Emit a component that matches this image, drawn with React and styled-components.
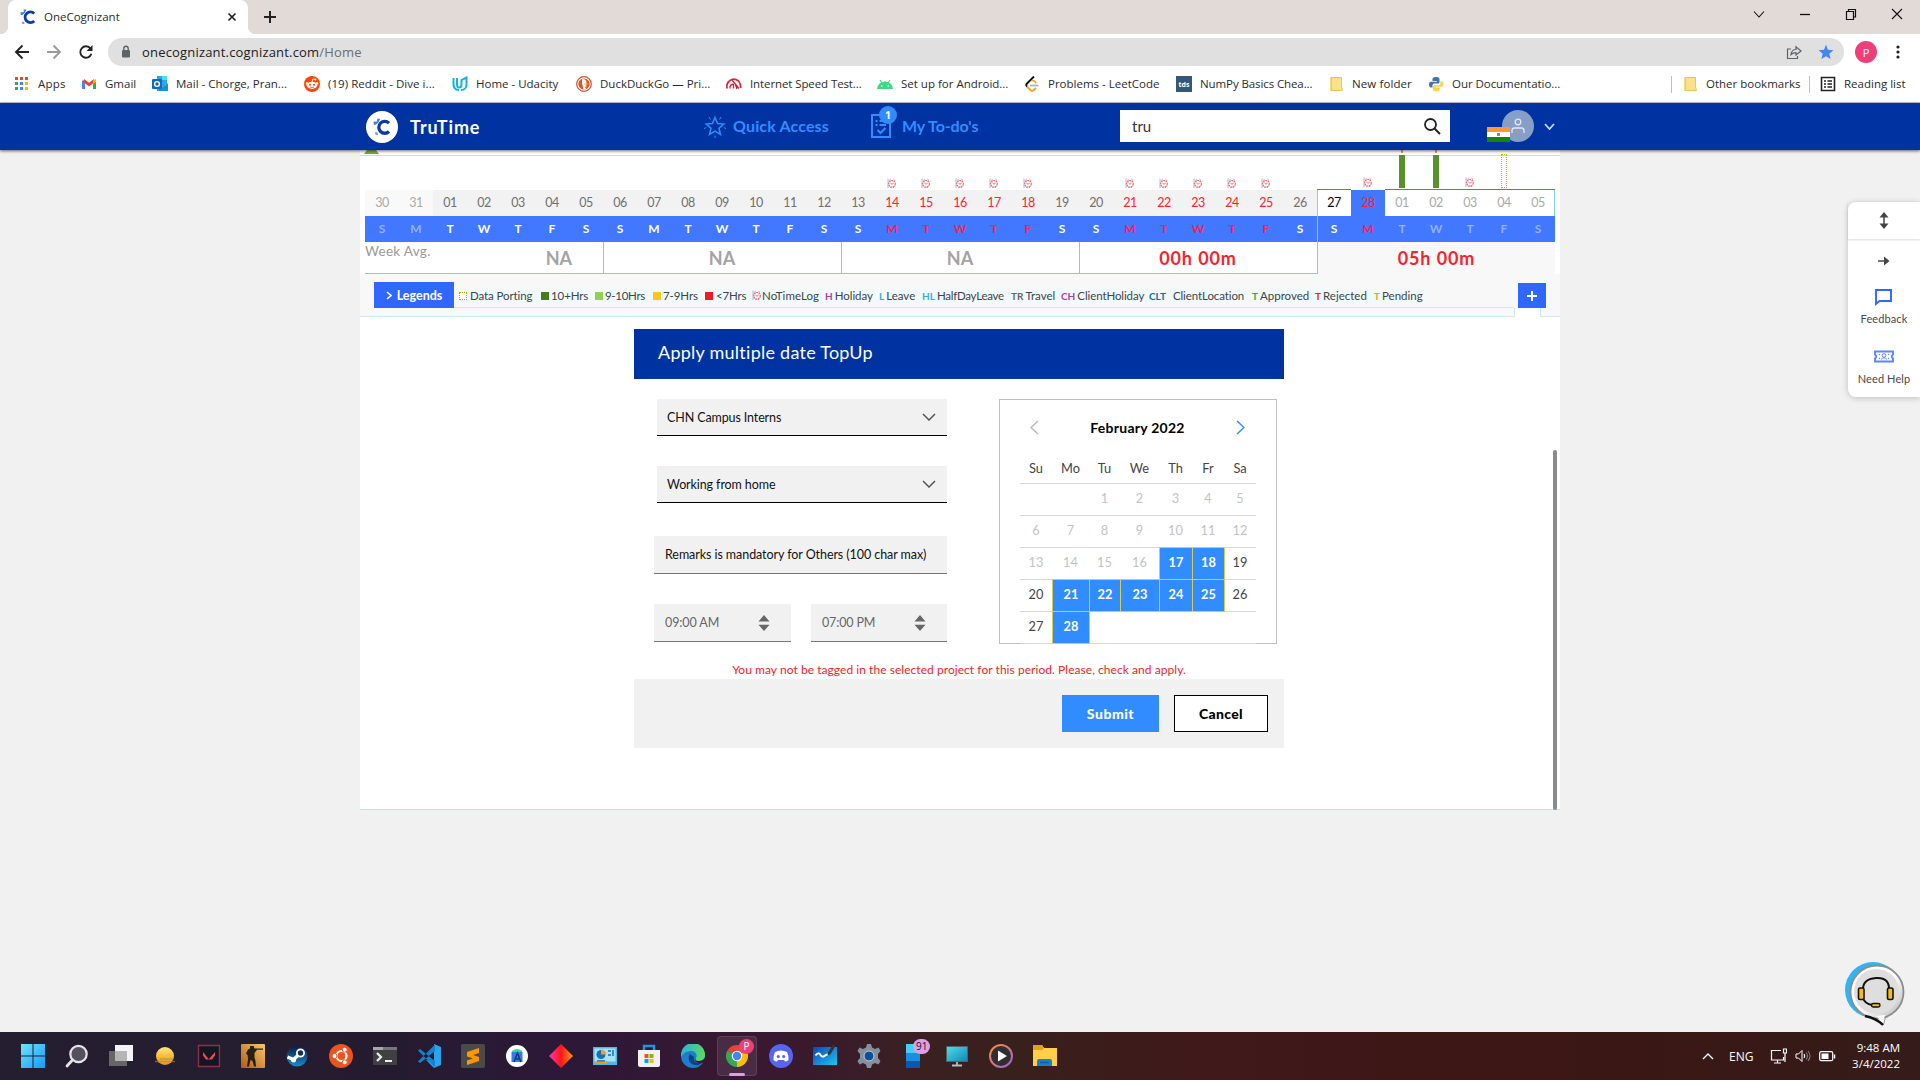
import React from "react";
import styled, { createGlobalStyle, css } from "styled-components";

const UI = '"Open Sans", "Noto Sans", sans-serif';
const BRAND = 'Lato, "Open Sans", sans-serif';

const Global = createGlobalStyle`
  * { box-sizing: border-box; }
  body { margin: 0; background: #f1f1f1; font-family: ${BRAND}; overflow: hidden; font-variant-ligatures: none; }
  svg { flex: none; }
`;

const Screen = styled.div`
  width: 1920px; height: 1080px; display: flex; flex-direction: column;
  overflow: hidden; background: #f1f1f1;
`;

const Txt = styled.span`
  white-space: nowrap; letter-spacing: ${(p) => p.$ls || 0}px;
`;

/* ---------- browser ---------- */
const TabStrip = styled.div`
  height: 34px; background: #e2dad7; display: flex; align-items: center;
  padding-left: 8px; flex: none; font-family: ${UI};
`;
const Tab = styled.div`
  width: 240px; height: 34px; background: #fff; border-radius: 8px 8px 0 0;
  display: flex; align-items: center; padding: 0 11px 0 12px; font-size: 11.5px; color: #2b2b2b;
  position: relative;
  &::before, &::after {
    content: ""; position: absolute; bottom: 0; width: 8px; height: 8px;
  }
  &::before { left: -8px; background: radial-gradient(circle at 0 0, transparent 8px, #fff 8.5px); }
  &::after { right: -8px; background: radial-gradient(circle at 100% 0, transparent 8px, #fff 8.5px); }
  span { margin-left: 8px; flex: 1; padding-bottom: 1px; }
`;
const NewTab = styled.div`
  margin-left: 15px; display: flex;
`;
const WindowControls = styled.div`
  margin-left: auto; display: flex; height: 28px; align-items: center; align-self: flex-start;
  svg { margin-right: 30px; }
  svg:last-child { margin-right: 15px; }
`;
const Toolbar = styled.div`
  height: 36px; background: #fff; display: flex; align-items: center; flex: none;
  padding-left: 14px; font-family: ${UI};
`;
const NavIcons = styled.div`
  width: 94px; display: flex; gap: 16px; flex: none;
`;
const Omnibox = styled.div`
  width: 1736px; height: 28px; border-radius: 14px; background: #e0e0e0; display: flex; flex: none;
  align-items: center; padding: 0 10px 0 12px; font-size: 13px; color: #202124;
  & > span { margin-left: 10px; flex: 1; }
  em { font-style: normal; color: #6b6e72; }
  svg + svg { margin-left: 16px; }
`;
const Profile = styled.div`
  width: 22px; height: 22px; border-radius: 50%; background: #ec407a; color: #fff; flex: none;
  font-size: 11px; display: flex; align-items: center; justify-content: center;
  margin: 0 18px 0 11px;
`;
const BookmarkBar = styled.div`
  height: 33px; background: #fff; border-bottom: 1px solid #c9c9cc; display: flex;
  align-items: center; padding: 0 0 4px 14px; flex: none; font-family: ${UI};
  font-size: 11.5px; color: #2b2b2b;
`;
const Bookmark = styled.div`
  width: ${(p) => p.$w}px; display: flex; align-items: center; gap: 8px; flex: none;
  span { padding-bottom: 2px; }
`;
const BarDivider = styled.div`
  width: 1px; height: 17px; background: #bdc1c6; margin: 0 ${(p) => p.$r}px 0 ${(p) => p.$l || 0}px;
`;

/* ---------- site header ---------- */
const Header = styled.header`
  height: 47px; background: #0033a1; display: flex; align-items: center; flex: none;
  padding: 0 0 2px 366px; box-shadow: 0 1px 3px rgba(0, 0, 0, 0.6); position: relative; z-index: 2;
`;
const BrandBox = styled.div`
  width: 337px; display: flex; align-items: center; gap: 12px; color: #fff;
  font-size: 18px; font-weight: 700; padding-top: 2px;
`;
const BrandLogo = styled.div`
  width: 32px; height: 32px; border-radius: 50%; background: #fff;
  display: flex; align-items: center; justify-content: center;
`;
const HeaderLink = styled.div`
  width: ${(p) => p.$w}px; display: flex; align-items: center; gap: ${(p) => p.$gap}px;
  color: #318dff; font-size: 16px; font-weight: 700; position: relative;
`;
const Badge = styled.div`
  position: absolute; left: 8px; top: -8px; width: 18px; height: 18px; border-radius: 50%;
  background: #318dff; color: #fff; font: 700 10.5px ${UI};
  display: flex; align-items: center; justify-content: center;
`;
const Search = styled.div`
  width: 330px; height: 32px; background: #fff; display: flex; align-items: center;
  justify-content: space-between; padding: 0 9px 0 12px; font-size: 15px; color: #333;
`;
const User = styled.div`
  margin-left: 37px; display: flex; align-items: center; position: relative; padding: 1px 0 0 15px;
`;
const Avatar = styled.div`
  width: 32px; height: 32px; border-radius: 50%; background: #859fc6;
  display: flex; align-items: center; justify-content: center; margin-right: 10px;
`;
const Flag = styled.div`
  position: absolute; left: 0; bottom: 0; width: 23px; height: 15px; z-index: 1;
  background: linear-gradient(#ff9933 0 34%, #fff 34% 67%, #138808 67%);
  display: flex; align-items: center; justify-content: center;
  &::after { content: ""; width: 3px; height: 3px; background: #7f7fc4; }
`;

/* ---------- time sheet ---------- */
const Body = styled.div`
  height: 882px; display: flex; padding-left: 360px; flex: none;
`;
const Sheet = styled.main`
  width: 1200px; height: 660px; background: #fff; border-bottom: 1px solid #c3e3f1;
  display: flex; flex-direction: column; position: relative;
`;
const Axis = styled.div`
  height: 6px; border-bottom: 1px solid #cfe5ba; padding-left: 4px; flex: none;
  &::before {
    content: ""; display: block; width: 15px; height: 4px; background: #7cab42;
    clip-path: polygon(20% 0, 80% 0, 100% 100%, 0 100%);
  }
`;
const Days = styled.div`
  display: grid; grid-template-columns: repeat(35, 34px); grid-template-rows: 100%; margin-left: 5px; flex: none;
  height: ${(p) => p.$h}px;
`;
const Mark = styled.div`
  display: flex; justify-content: center; align-items: flex-end;
  padding: 0 ${(p) => p.$pr || 0}px ${(p) => p.$pb}px 0;
`;
const HourBar = styled.div`
  width: 6px; height: 33px; background: #5a912b; position: relative; flex: none;
  &::before { content: ""; position: absolute; left: 2px; top: -5px; width: 2px; height: 3px; background: #d9a33b; }
`;
const PortingBar = styled.div`
  width: 6px; height: 34px; border: 1px dotted #bdb500; flex: none;
`;
const DateCell = styled.div`
  display: flex; align-items: center; justify-content: center; padding-bottom: 1px; font-size: 12.5px;
  letter-spacing: -0.4px;
  background: ${(p) => (p.$future || p.$today ? "#fff" : p.$prev ? "#f9f9f9" : "#f2f2f2")};
  color: ${(p) => (p.$red ? "#f9242c" : p.$prev || p.$future ? "#a9a9a9" : p.$today ? "#000" : "#707070")};
  ${(p) => p.$future && css`box-shadow: 0 -1px 0 #4178ff;`}
  ${(p) => p.$today && css`box-shadow: 0 -1px 0 #4178ff, inset 1px 0 0 #86d0f3;`}
  ${(p) => p.$last && css`box-shadow: 0 -1px 0 #4178ff, inset -1px 0 0 #86d0f3;`}
  ${(p) => p.$active && css`background: #4178ff;`}
`;
const DayCell = styled.div`
  display: flex; align-items: center; justify-content: center; padding-bottom: 2px;
  font-size: 12px; font-weight: 700; background: #4178ff;
  color: ${(p) => (p.$red ? "#f02655" : p.$dim ? "#93b2ff" : "#fff")};
  ${(p) => p.$edge && css`box-shadow: inset 1px 0 0 #86d0f3;`}
`;
const Weeks = styled.div`
  display: grid; grid-template-columns: 239px repeat(3, 238px) 237px; margin-left: 5px;
  height: 32px; flex: none;
`;
const Week = styled.div`
  border-right: 1px solid #7fcaf0; border-bottom: 1px solid #7fcaf0; display: flex;
  align-items: center; justify-content: center; font-size: 18px; font-weight: 700; color: #a3a3a3;
  padding: 1px 1px 0 0;
  &:last-child { border: 0; background: #f8f8f8; padding: 0 0 1px; }
  ${(p) => p.$alert && css`color: #f0262f; letter-spacing: 0.9px;`}
  ${(p) => p.$first && css`justify-content: space-between; padding-right: 31px;`}
`;
const WeekLabel = styled.span`
  font-size: 13.5px; font-weight: 400; align-self: flex-start; color: #999; letter-spacing: 0.3px;
`;
const LegendBar = styled.div`
  height: 43px; flex: none; background: #f8f8f8; border-bottom: 1px solid #cde9f3; display: flex;
  padding-left: 14px; align-items: flex-start; padding-top: 8px; margin-bottom: 12px;
`;
const LegendToggle = styled.div`
  width: 80px; height: 26px; background: #2f67ff; color: #fff; font-size: 12.5px; font-weight: 700;
  display: flex; align-items: center; justify-content: center; gap: 5px;
`;
const LegendList = styled.div`
  width: 1060px; height: 26px; border-bottom: 1px solid #cde9f3; display: flex; align-items: center;
  padding: 2px 0 0 5px; font-size: 11.5px; color: #444;
`;
const LegendItem = styled.div`
  width: ${(p) => p.$w}px; height: 14px; background: #f0f9fc; display: flex; align-items: center;
  gap: ${(p) => p.$gap || 2}px; flex: none;
`;
const Swatch = styled.i`
  width: 8px; height: 8px; flex: none; background: ${(p) => p.$c};
  ${(p) => p.$dotted && css`border: 1px dotted #b8b400; background: #fff;`}
`;
const Code = styled.b`
  font-size: 10px; color: ${(p) => p.$c};
`;
const AddColumn = styled.div`
  display: flex; flex-direction: column;
`;
const AddButton = styled.div`
  width: 28px; height: 25px; margin: 1px 0 0 4px; background: #2f67ff; display: flex;
  align-items: center; justify-content: center;
`;
const Notch = styled.div`
  width: 27px; height: 9px; background: #fff; border: solid #cde9f3; border-width: 0 1px;
`;
const ScrollThumb = styled.div`
  position: absolute; right: 3px; top: 300px; width: 4px; height: 360px; background: #8a8a8a; border-radius: 2px;
`;

/* ---------- dialog ---------- */
const Dialog = styled.section`
  width: 650px; margin-left: 274px; display: flex; flex-direction: column;
`;
const DialogTitle = styled.div`
  height: 50px; background: #0033a1; color: #fff; font-size: 18px; padding: 11px 0 0 24px; line-height: 24px;
`;
const DialogBody = styled.div`
  height: 300px; display: grid; grid-template-columns: 293px 278px; column-gap: 52px;
  padding-left: 20px; padding-top: 20px; grid-template-rows: 246px 1fr;
`;
const Fields = styled.div`
  display: flex; flex-direction: column;
`;
const Select = styled.div`
  height: 37px; margin: 0 0 30px 3px; background: #f1f1f1; border-bottom: 1px solid #000;
  display: flex; align-items: center; justify-content: space-between; padding: 0 11px 0 10px;
  font-size: 12.5px; color: #111;
`;
const Input = styled.div`
  height: 38px; width: ${(p) => p.$w || 293}px; background: #f1f1f1; border-bottom: 1px solid #767676;
  display: flex; align-items: center; justify-content: space-between; padding: 0 ${(p) => p.$pr || 0}px 0 11px;
  font-size: 12.5px; color: ${(p) => p.$c || "#111"};
`;
const TimeRow = styled.div`
  display: flex; gap: 20px; margin-top: 30px;
`;
const FieldGap = styled.div`
  height: 3px;
`;
const Calendar = styled.div`
  height: 245px; border: 1px solid #c0c0c0; display: flex; flex-direction: column; align-items: center;
`;
const MonthBar = styled.div`
  width: 225px; height: 55px; display: flex; align-items: center; justify-content: space-between; flex: none;
  padding: 0 5px 1px 4px; font-size: 14px; font-weight: 700; color: #000;
  span { padding-top: 1px; }
`;
const DateGrid = styled.div`
  width: 236px; display: grid; grid-template-columns: 32px 37px 31px 39px 33px 32px 32px; flex: none;
  grid-template-rows: 29px repeat(5, 32px); font-size: 12.8px; color: #444;
`;
const Cell = styled.div`
  display: flex; align-items: center; justify-content: center; border-bottom: 1px solid #d8d8d8;
  color: ${(p) => (p.$off ? "#c3c3c3" : "#444")}; padding-bottom: 3px;
  ${(p) => p.$on && css`
    background: #318dff; color: #fff; font-weight: 700; border-bottom-color: #d3cf55;
    border-left: 1px solid #d3cf55;
    box-shadow: 1px 0 0 #d3cf55, 0 -1px 0 #d3cf55; z-index: 1;
  `}
`;
const Warning = styled.div`
  grid-column: 1 / -1; text-align: center; font-size: 12px; color: #ec1f2b; padding: 17px 13px 0 0;
`;
const DialogFoot = styled.div`
  height: 69px; background: #f1f1f1; display: flex; justify-content: flex-end; gap: 15px; padding: 16px 16px 0 0;
`;
const Button = styled.div`
  width: ${(p) => p.$w}px; height: 37px; display: flex; align-items: center; justify-content: center;
  font-size: 14px; font-weight: 900; background: ${(p) => (p.$primary ? "#318dff" : "#fff")};
  color: ${(p) => (p.$primary ? "#fff" : "#000")}; letter-spacing: ${(p) => (p.$primary ? 0.5 : 0.3)}px;
  border: ${(p) => (p.$primary ? "0" : "1px solid #000")};
`;

/* ---------- side tools ---------- */
const Side = styled.aside`
  margin-left: 288px; width: 72px; display: flex; flex-direction: column; justify-content: space-between;
  align-items: flex-end;
`;
const SidePanel = styled.div`
  margin-top: 52px; width: 72px; height: 195px; background: #fff; border-radius: 8px 0 0 8px;
  box-shadow: 0 1px 6px rgba(0, 0, 0, 0.22); display: flex; flex-direction: column; align-items: center;
  font-size: 11px; color: #4a4a4a;
`;
const SideHandle = styled.div`
  width: 72px; height: 37px; display: flex; align-items: center; justify-content: center;
  box-shadow: 0 1px 2px rgba(0, 0, 0, 0.15); flex: none;
`;
const SideItem = styled.div`
  height: ${(p) => p.$h}px; display: flex; flex-direction: column; align-items: center;
  justify-content: space-between; margin-top: ${(p) => p.$mt}px;
`;
const ChatBubble = styled.div`
  margin: 0 15px 6px 0; display: flex;
`;

/* ---------- taskbar ---------- */
const Taskbar = styled.footer`
  height: 48px; flex: none; display: flex; align-items: center; padding: 0 20px 0 11px;
  background: linear-gradient(90deg, #241e30 0, #251b30 400px, #2c1838 560px, #391831 760px, #3a2022 920px, #38201c 1020px, #40191a 1200px, #3a1614 1600px, #351c1a 100%);
  color: #fff; font-family: ${UI};
`;
const TaskIcon = styled.div`
  width: 44px; height: 44px; display: flex; align-items: center; justify-content: center; position: relative;
  ${(p) => p.$active && css`
    &::before { content: ""; position: absolute; inset: 2px; border-radius: 4px; background: rgba(255,255,255,.09); border: 1px solid rgba(255,255,255,.1); }
    &::after { content: ""; position: absolute; bottom: 2px; width: 16px; height: 3px; border-radius: 2px; background: #d9a0e2; }
  `}
  svg { position: relative; }
`;
const TaskBadge = styled.span`
  position: absolute; left: ${(p) => p.$left || 24}px; top: ${(p) => p.$top}px; min-width: 15px; height: 15px; padding: 0 ${(p) => p.$px || 0}px; border-radius: 8px;
  background: ${(p) => p.$c}; color: ${(p) => p.$fg}; font-size: 10px; line-height: 15px; text-align: center;
`;
const Tray = styled.div`
  margin-left: auto; display: flex; align-items: center; font-size: 11.5px;
`;
const TrayLang = styled.div`
  width: 41px; margin-left: 15px; font-size: 12px;
`;
const TrayIcons = styled.div`
  display: flex; gap: 8px; width: 80px; align-items: center;
`;
const Clock = styled.div`
  width: 50px; text-align: right; line-height: 16px; display: flex; flex-direction: column; align-items: flex-end;
`;

/* ---------- drawings ---------- */
const S = ({ w = 16, h, vb, children, ...r }) => (
  <svg width={w} height={h || w} viewBox={vb || `0 0 ${w} ${h || w}`} fill="none" {...r}>
    {children}
  </svg>
);
const CLogo = ({ s = 16 }) => (
  <S w={s} vb="0 0 16 16">
    <path d="M14.2 4.5A5.3 5.3 0 1 0 14.2 12" stroke="#0b3aa5" strokeWidth="2.900" />
    <path d="M.5 3.200h3.200V.6h2.800L4.600 4.300 2.300 6H.8z" fill="#3f7af5" />
    <path d="M1.600 12.700h2.200l.9 2.300H2.400z" fill="#6e9bf5" />
  </S>
);
const Folder = () => (
  <S>
    <path d="M3.500 1.500h10v10l1 2v1h-11z" fill="#fde08a" stroke="#e8c65a" /><path d="M3 1v14" stroke="#f3cd5d" strokeWidth="1.500" />
  </S>
);
const NoLog = () => (
  <S w={9} h={11} vb="0 0 9 11">
    <path d="M1 .5v9.500" stroke="#b3b5dd" />
    <path d="M2.200 2.500L3.500 1.200M6.500 1.200L8 2.500" stroke="#f0848c" />
    <circle cx="5" cy="5.800" r="3.300" stroke="#ee5f6b" strokeWidth="1.100" strokeDasharray="1.900 .5" />
    <path d="M3.400 5l1.600 1.200L6.800 5M3.500 10l.6-1M6.600 10L6 9" stroke="#ee6b75" strokeWidth=".9" />
  </S>
);
const Chev = ({ w, h, c, sw = 1.5, d }) => {
  const p = { down: `M1 1L${w / 2} ${h - 1}L${w - 1} 1`, up: `M1 ${h - 1}L${w / 2} 1L${w - 1} ${h - 1}`, left: `M${w - 1} 1L1 ${h / 2}L${w - 1} ${h - 1}`, right: `M1 1L${w - 1} ${h / 2}L1 ${h - 1}` }[d];
  return <S w={w} h={h}><path d={p} stroke={c} strokeWidth={sw} /></S>;
};
const Spinner = () => (
  <S w={12} h={16}><path d="M6 0l5.500 6.500H.5zM6 16L.5 9.800h11z" fill="#666" /></S>
);

const appColors = [["#ea4335", "#ea4335", "#ea4335"], ["#34a853", "#4285f4", "#fbbc05"], ["#34a853", "#4285f4", "#fbbc05"]];

const bookmarks = [
  ["Apps", 67, 0.2, <S>{appColors.map((row, r) => row.map((c, i) => <rect key={r + "-" + i} x={1 + i * 5} y={1 + r * 5} width="3" height="3" fill={c} />))}</S>],
  ["Gmail", 71, 0, <S><path d="M1 4v9h3V7z" fill="#4285f4" /><path d="M15 4v9h-3V7z" fill="#34a853" /><path d="M2.500 4.300L8 8.600l5.500-4.300" stroke="#ea4335" strokeWidth="2.800" /><path d="M12 4.500l3-1.500v3l-3 2z" fill="#fbbc04" /></S>],
  ["Mail - Chorge, Pran...", 152, 0, <S><path d="M5 0h10v7l1 1v7H5z" fill="#28a8ea" /><path d="M10 0h5v4h-5z" fill="#50d9ff" /><path d="M5 15h11V8z" fill="#1490df" /><rect y="3" width="10" height="10" rx="1" fill="#0f6cbd" /><circle cx="5" cy="8" r="2.400" stroke="#fff" strokeWidth="1.400" /></S>],
  ["(19) Reddit - Dive i...", 148, 0.05, <S><circle cx="8" cy="8" r="8" fill="#ff4500" /><ellipse cx="8" cy="9.300" rx="5.200" ry="3.600" fill="#fff" /><circle cx="3" cy="7.500" r="1.300" fill="#fff" /><circle cx="13" cy="7.500" r="1.300" fill="#fff" /><circle cx="6" cy="8.800" r="1" fill="#ff4500" /><circle cx="10" cy="8.800" r="1" fill="#ff4500" /><path d="M8 6l.8-3 2.400.6" stroke="#fff" /><path d="M6 11q2 1.200 4 0" stroke="#ff4500" strokeWidth=".8" /><circle cx="11.400" cy="3.600" r="1" fill="#fff" /></S>],
  ["Home - Udacity", 124, 0, <S><path d="M1.500 2v6c0 4 2.500 6 5.500 6M5 2v6.500c0 2 1 3 2.200 3S9.500 10.500 9.500 8.500V4L14.500 1.500V8.500c0 3.500-2.500 5.500-5.500 5.500" stroke="#12b3e0" strokeWidth="2" /></S>],
  ["DuckDuckGo — Pri...", 150, 0, <S><circle cx="8" cy="8" r="7.300" fill="#fff" stroke="#c9502c" strokeWidth="1.200" /><circle cx="8" cy="8" r="5.600" fill="#d9552c" /><path d="M6 3.500c3-1 5 1 4.500 4L10 13l-2.500.5L6 7z" fill="#fff" /><path d="M8.500 7.500h3.500l-1 1.500H8.500z" fill="#fbbc04" /><path d="M9 10.500l2.500 1-2 1z" fill="#4caf50" /></S>],
  ["Internet Speed Test...", 151, -0.1, <S><path d="M1.200 12.500A7 7 0 0 1 4 4.500Q8 1.500 12.500 5q2.300 2.500 2.300 7" stroke="#e02638" strokeWidth="1.700" /><path d="M4 12.500q-.5-4 3.500-4.500M6 4l7 8.500M9.500 9l1.500 4M7.500 8v4.500" stroke="#c9283a" strokeWidth="1.300" /></S>],
  ["Set up for Android...", 147, 0, <S><path d="M0 13a8 7.500 0 0 1 16 0z" fill="#3ddc84" /><path d="M3 4l2 3M13 4l-2 3" stroke="#3ddc84" strokeWidth="1.200" /><circle cx="4.800" cy="10" r=".8" fill="#fff" /><circle cx="11.200" cy="10" r=".8" fill="#fff" /></S>],
  ["Problems - LeetCode", 152, 0, <S><path d="M10 .5L3 7.500c-1 1-1 2 0 3" stroke="#111" strokeWidth="1.900" /><path d="M3 10.500l3.500 3.700q1.500 1.500 3 0L12 12" stroke="#f5a11d" strokeWidth="1.900" /><path d="M6 9.500h8.500" stroke="#b3b3b3" strokeWidth="1.800" /><path d="M7.500 4.700q1.500-.7 3 .5l1.800 1.800" stroke="#f5a11d" strokeWidth="1.600" /></S>],
  ["NumPy Basics Chea...", 152, -0.1, <S><path d="M0 0h16v16H0z" fill="#355876" /><text x="8" y="10.500" fontSize="7" fontWeight="700" fill="#fff" textAnchor="middle" fontFamily="Open Sans">tds</text></S>],
  ["New folder", 100, 0.1, <Folder />],
  ["Our Documentatio...", 140, -0.05, <S><path d="M8 1c-3 0-3.500 1-3.500 2.200V5H9v.8H3C1.500 5.800 1 7 1 8.500s.5 3 2 3h1.500V9.500C4.500 8 5.500 7.500 6.500 7.500h3.600c1 0 1.400-.8 1.400-1.600V3.200C11.500 1.500 10 1 8 1z" fill="#3a76a8" /><path d="M8 15.500c3 0 3.700-1 3.700-2.300v-1.700H7.500v-.8h6c1.200 0 1.700-1.200 1.700-2.700s-.5-2.700-1.900-2.700h-1v2c0 1.200-1 2-2 2H6.500C5.500 9.300 4.800 10 4.800 11v2.300c0 1.500 1.200 2.200 3.200 2.200z" fill="#ffd544" /></S>],
];

const letters = "SMTWTFS";
const dates = ["30", "31", ...Array.from({ length: 28 }, (_, i) => String(i + 1).padStart(2, "0")), "01", "02", "03", "04", "05"];
const days = dates.map((d, i) => ({
  d, l: letters[i % 7], i,
  red: (i >= 15 && i <= 19) || (i >= 22 && i <= 26) || i === 29,
  prev: i < 2, future: i > 29,
}));
const markPad = (i) => (i > 28 ? 2 : 1);

const legends = [
  ["Data Porting", 82, -0.1, <Swatch $dotted />, 3], ["10+Hrs", 54, -0.1, <Swatch $c="#4a7d14" />],
  ["9-10Hrs", 58, -0.3, <Swatch $c="#92d050" />], ["7-9Hrs", 52, -0.1, <Swatch $c="#ffc41f" />],
  ["<7Hrs", 47, -0.15, <Swatch $c="#ee1c25" />, 3], ["NoTimeLog", 73, 0.05, <NoLog />, 1],
  ["Holiday", 54, -0.05, <Code $c="#b53aa6">H</Code>], ["Leave", 43, 0, <Code $c="#3fa9d0">L</Code>],
  ["HalfDayLeave", 89, -0.25, <Code $c="#3fa9d0">HL</Code>], ["Travel", 50, 0, <Code $c="#666">TR</Code>],
  ["ClientHoliday", 88, -0.1, <Code $c="#b53aa6">CH</Code>], ["ClientLocation", 103, -0.1, <Code $c="#0a7396">CLT</Code>, 7],
  ["Approved", 63, 0, <Code $c="#5a9a2b">T</Code>], ["Rejected", 59, 0, <Code $c="#ee1c25">T</Code>],
  ["Pending", 51, 0, <Code $c="#dfa91a">T</Code>],
];

const picked = [17, 18, 21, 22, 23, 24, 25, 28];

const tasks = [
  <S w={24}><defs><linearGradient id="win" x1="0" y1="0" x2="1" y2="1"><stop stopColor="#6fe4fb" /><stop offset="1" stopColor="#149af6" /></linearGradient></defs><path d="M0 0h11.500v11.500H0zM12.500 0H24v11.500H12.500zM0 12.500h11.500V24H0zM12.500 12.500H24V24H12.500z" fill="url(#win)" /></S>,
  <S w={24}><circle cx="13.500" cy="10" r="8.200" fill="#54505f" stroke="#e4e4ea" strokeWidth="2.200" /><path d="M7.500 16l-5.500 6" stroke="#e4e4ea" strokeWidth="2.800" strokeLinecap="round" /></S>,
  <S w={24}><path d="M6 1h18v16H6z" fill="#f4f4f6" /><path d="M0 7h18v15H0z" fill="#666" /><path d="M6 7h12v10H6z" fill="#b5b5b7" /></S>,
  <S w={24}><defs><linearGradient id="sun" x1="0" y1="0" x2="0" y2="1"><stop stopColor="#ffe58a" /><stop offset=".6" stopColor="#f8b526" /><stop offset="1" stopColor="#e0952a" /></linearGradient></defs><circle cx="12" cy="12" r="9" fill="url(#sun)" /><path d="M2 17.500h20M7 15h13" stroke="#a98a58" strokeOpacity=".6" strokeWidth="1.500" /></S>,
  <S w={24}><path d="M1.500 1.500h21v21h-21z" fill="#111823" stroke="#8d3042" strokeWidth="1.400" /><path d="M6 8l6 7.500H9L6 11.500zM18 8v3.500l-3 4h-2.800L12 15z" fill="#fa4454" /></S>,
  <S w={24}><defs><linearGradient id="cs" x1="1" y1="0" x2="0" y2="1"><stop stopColor="#f7c76b" /><stop offset="1" stopColor="#b35c14" /></linearGradient></defs><rect width="24" height="24" rx="1" fill="url(#cs)" /><path d="M9 2h3.500l1 2.500H22v1.200h-6L13.500 9v4.500l1 3.500.5 5.500h-2L11.500 17l-2-1-1.500 6.500H6L7 15l-.5-4L5 9.500 7 5.500l2-1z" fill="#2a2113" /></S>,
  <S w={24}><defs><linearGradient id="st" x1="0" y1="0" x2="0" y2="1"><stop stopColor="#0d1b3d" /><stop offset="1" stopColor="#1a8ac9" /></linearGradient></defs><circle cx="12" cy="12" r="10.500" fill="url(#st)" /><path d="M2.500 13l6 2.500 5.500-5" stroke="#fff" strokeWidth="3.500" /><circle cx="15.500" cy="9" r="3.600" fill="#12305a" stroke="#fff" strokeWidth="1.800" /><circle cx="8.500" cy="16" r="2.500" fill="#fff" /></S>,
  <S w={24}><circle cx="12" cy="12" r="12" fill="#e95420" /><circle cx="12.500" cy="12" r="5" stroke="#fff" strokeWidth="2.200" /><g fill="#fff" stroke="#e95420"><circle cx="5.500" cy="12" r="2.500" /><circle cx="15.700" cy="5.700" r="2.500" /><circle cx="15.700" cy="18.300" r="2.500" /></g></S>,
  <S w={24}><path d="M0 3h24v18H0z" fill="#404040" /><path d="M0 3h24v3H0z" fill="#a8a8a8" /><path d="M10 3h14v3H10z" fill="#777" /><path d="M4 9l4 4-4 4M12 17h7" stroke="#eee" strokeWidth="2.200" /></S>,
  <S w={24}><path d="M17 0l7 3v18l-7 3-8-8 8 2V6z" fill="#2aa5ec" /><path d="M1 6.500L3 5l15 12v6.500zM1 17.500L3 19 18 7V.5z" fill="#1382cf" /></S>,
  <S w={24}><rect width="24" height="24" rx="2" fill="#4a4a4a" /><path d="M6 8l12-4v5l-6 2 6 2v4L6 21v-4.500l6-2-6-2z" fill="#ff9800" /></S>,
  <S w={24}><circle cx="12" cy="12" r="11" fill="#fff" /><path d="M7 7q5-4 10 0v3H7z" fill="#3ddc84" /><path d="M6.500 8h11v10h-11z" fill="#2f7de8" /><path d="M9 18l3.500-9 3.500 9M11 15h3" stroke="#0f3b75" strokeWidth="1.500" /></S>,
  <S w={24}><defs><linearGradient id="ad" x1="0" x2="1"><stop stopColor="#f238b0" /><stop offset=".5" stopColor="#ff1515" /><stop offset="1" stopColor="#ff9a1c" /></linearGradient></defs><path d="M12 0l12 12-12 12L0 12z" fill="url(#ad)" /></S>,
  <S w={24}><path d="M0 3h24v18H0z" fill="#4db7ea" /><path d="M1.500 4.500h21v13h-21z" fill="#a5e3fa" /><circle cx="8" cy="10.500" r="4.500" fill="#1470b5" /><path d="M8 10.500V5.500a5 5 0 0 1 5 5z" fill="#f39c28" /><path d="M15 7h3M15 11h3M20 6v6M4 17h8" stroke="#1470b5" strokeWidth="1.500" /><path d="M2 18.500h12" stroke="#f39c28" strokeWidth="1.500" /></S>,
  <S w={24}><path d="M7 6V2h10v4" stroke="#1d95e0" strokeWidth="2.500" /><path d="M1 6h22v15q0 2-2 2H3q-2 0-2-2z" fill="#f1f1f1" /><path d="M7.500 10h4v4h-4z" fill="#f25022" /><path d="M12.500 10h4v4h-4z" fill="#7fba00" /><path d="M7.500 15h4v4h-4z" fill="#00a4ef" /><path d="M12.500 15h4v4h-4z" fill="#ffb900" /></S>,
  <S w={24}><defs><linearGradient id="ed" x1="0" y1="0" x2="1" y2=".3"><stop stopColor="#2aaee6" /><stop offset="1" stopColor="#58d864" /></linearGradient></defs><circle cx="12" cy="12" r="12" fill="#1b7fd0" /><path d="M0 11A12 12 0 0 1 24 11c0 4-3 6-6 6-3 0-4-1-3-3 2-4-1-7-5-7S2 9 0 13z" fill="url(#ed)" /><path d="M9 10c-3 4-1 10 5 11 3 .5 6-.5 8-3-4 2-10 1-9-5z" fill="#123f80" /><path d="M24.500 13c-1.500 3-4 4-6.500 4-3 0-4.500-1-3-3.500-2 2.500-.5 5 3 5.500 2 .3 3.500 0 5-1z" fill="#35172f" /></S>,
  <><S w={22} vb="0 0 24 24"><path d="M12 12L1.600 6A12 12 0 0 1 22.400 6z" fill="#ea4335" /><path d="M12 12l10.400-6A12 12 0 0 1 12 24z" fill="#fbbc05" /><path d="M12 12v12A12 12 0 0 1 1.600 6z" fill="#34a853" /><circle cx="12" cy="12" r="5.800" fill="#fff" /><circle cx="12" cy="12" r="4.600" fill="#4285f4" /></S><TaskBadge $top={5} $c="#ec407a" $fg="#fff">P</TaskBadge></>,
  <S w={24}><circle cx="12" cy="12" r="12" fill="#5865f2" /><path d="M6 8q6-3 12 0 2 4 1.500 8-2 1.500-3.500 1.500l-1-1.500H9l-1 1.500q-1.500 0-3.500-1.500Q4 12 6 8z" fill="#fff" /><circle cx="9.300" cy="12.500" r="1.600" fill="#5865f2" /><circle cx="14.700" cy="12.500" r="1.600" fill="#5865f2" /></S>,
  <S w={24}><defs><linearGradient id="wb" x1="0" y1="0" x2="1" y2="1"><stop stopColor="#0b45b8" /><stop offset="1" stopColor="#22c4f0" /></linearGradient></defs><path d="M0 3h24v18H0z" fill="url(#wb)" /><path d="M2.500 11.500q3-4 5-.5 2 3 4.500.5 1.500-1 3-1" stroke="#fff" strokeWidth="2" /><path d="M15 8.500L20 .5l2.500 1.500-5 8-3 1.500z" fill="#333" /></S>,
  <S w={24}><path d="M10 0h4l1 3.500 3 1.500 3.500-1.500 2 3.500-2.500 3v4l2.500 3-2 3.500L18 19l-3 1.500-1 3.500h-4l-1-3.500L6 19l-3.500 1.500-2-3.500L3 14v-4L.5 7l2-3.500L6 5l3-1.500z" fill="#84919c" /><circle cx="12" cy="12" r="5" fill="#0d4f9c" stroke="#c5ccd2" /></S>,
  <><S w={24}><path d="M5 0h14v24H5z" fill="#1a8ee0" /><path d="M5 0h14v9H5z" fill="#43d0f5" /><path d="M5 17h14v7H5z" fill="#0c58a8" /></S><TaskBadge $left={22} $top={5} $px={3} $c="#dda0e6" $fg="#1b1020">91</TaskBadge></>,
  <S w={24}><defs><linearGradient id="mo" x1="0" y1="0" x2="1" y2="1"><stop stopColor="#4be0e8" /><stop offset="1" stopColor="#1583b5" /></linearGradient></defs><path d="M1.500 2.500h21v15h-21z" fill="url(#mo)" stroke="#55606a" /><path d="M12 18v3M7 21.500h10" stroke="#b5bcc2" strokeWidth="1.800" /></S>,
  <S w={24}><defs><linearGradient id="mp" x1="0" y1="0" x2="1" y2="1"><stop stopColor="#f98b3c" /><stop offset="1" stopColor="#9a62d8" /></linearGradient></defs><circle cx="12" cy="12" r="11" fill="#302e30" stroke="url(#mp)" strokeWidth="2" /><path d="M9 6.500l9 5.500-9 5.500z" fill="#fff" /></S>,
  <S w={24}><path d="M0 1h9l2 3h13v18H0z" fill="#ffcf48" /><path d="M0 1h9l2 3-2 2H0z" fill="#e0a21b" /><path d="M4 22v-5q0-2 2-2h11q2 0 2 2v5z" fill="#1680d0" /><path d="M7 18.500h9" stroke="#0c5ea5" strokeWidth="1.500" /></S>,
];

export default function App() {
  return (
    <Screen>
      <Global />
      <TabStrip>
        <Tab>
          <CLogo />
          <Txt>OneCognizant</Txt>
          <S w={10}><path d="M1.500 1.500l7 7M8.500 1.500l-7 7" stroke="#222" strokeWidth="1.700" /></S>
        </Tab>
        <NewTab><S w={14}><path d="M7 1v12M1 7h12" stroke="#222" strokeWidth="2" /></S></NewTab>
        <WindowControls>
          <S><path d="M3 5.500l5 5.500 5-5.500" stroke="#111" strokeWidth="1.100" /></S>
          <S><path d="M3 8.500h10" stroke="#111" strokeWidth="1.300" /></S>
          <S><path d="M3.500 5.500h7v8h-7zM5.500 5V3.500h7v7.500H11" stroke="#111" strokeWidth="1.200" /></S>
          <S><path d="M3 3l10 10M13 3L3 13" stroke="#111" strokeWidth="1.100" /></S>
        </WindowControls>
      </TabStrip>

      <Toolbar>
        <NavIcons>
          <S><path d="M15 8H2M8.500 1.500L2 8l6.500 6.500" stroke="#222" strokeWidth="1.900" /></S>
          <S><path d="M1 8h13M7.500 1.500L14 8l-6.500 6.500" stroke="#9a9a9a" strokeWidth="1.900" /></S>
          <S><path d="M13.400 9.800A5.700 5.700 0 1 1 12.500 4.500" stroke="#222" strokeWidth="1.900" /><path d="M14.500 1v6h-6z" fill="#222" /></S>
        </NavIcons>
        <Omnibox>
          <S w={12} h={14} vb="0 0 12 14"><rect x="2" y="5" width="8" height="7.500" rx="1" fill="#5f6368" /><path d="M3.800 5V3.500a2.200 2.200 0 0 1 4.400 0V5" stroke="#5f6368" strokeWidth="1.400" /></S>
          <Txt $ls={0.18}>onecognizant.cognizant.com<em>/Home</em></Txt>
          <S><path d="M5 5H1.500v9.500h10V12M5 10.500c.5-3.500 2-5 5-5V2.800L15 7l-5 4V8.600c-2.500 0-3.500.4-5 1.900z" stroke="#5f6368" strokeWidth="1.200" /></S>
          <S><path d="M8 .8l2 5 5.400.4-4.100 3.500 1.300 5.300L8 12.200 3.400 15l1.300-5.300L.6 6.200 6 5.800z" fill="#4285f4" /></S>
        </Omnibox>
        <Profile>P</Profile>
        <S w={6} h={16}><g fill="#222"><circle cx="3" cy="3" r="1.600" /><circle cx="3" cy="8" r="1.600" /><circle cx="3" cy="13" r="1.600" /></g></S>
      </Toolbar>

      <BookmarkBar>
        {bookmarks.map(([t, w, ls, icon]) => (
          <Bookmark key={t} $w={w}>{icon}<Txt $ls={ls}>{t}</Txt></Bookmark>
        ))}
        <BarDivider $l={103} $r={10} />
        <Bookmark $w={117}><Folder /><Txt>Other bookmarks</Txt></Bookmark>
        <BarDivider $l={10} $r={10} />
        <Bookmark $w={90}>
          <S><path d="M1.500 1.500h13v13h-13z" stroke="#222" strokeWidth="1.600" /><path d="M4 5h2M7.500 5H12M4 8h2M7.500 8H12M4 11h2M7.500 11H12" stroke="#222" strokeWidth="1.500" /></S>
          <Txt>Reading list</Txt>
        </Bookmark>
      </BookmarkBar>

      <Header>
        <BrandBox><BrandLogo><CLogo s={18} /></BrandLogo><Txt $ls={0.9}>TruTime</Txt></BrandBox>
        <HeaderLink $w={168} $gap={6}>
          <S w={24}><path d="M12 3.500l2.500 6 6.300.5-4.800 4.200 1.500 6.300L12 17.200l-5.500 3.300L8 14.200 3.200 10l6.300-.5z" stroke="#318dff" strokeWidth="1.500" /><path d="M6 3l1.500 2.500M18 3l-1.500 2.500M1 14.500l2-.8M23 14.500l-2-.8M12 21.500V24" stroke="#318dff" /></S>
          <Txt $ls={0.15}>Quick Access</Txt>
        </HeaderLink>
        <HeaderLink $w={249} $gap={11}>
          <S w={20} h={24}><path d="M1 1h18v22H1z" stroke="#318dff" strokeWidth="2" /><path d="M4.500 7h2M8.500 7H15M4.500 11h2M8.500 11H15" stroke="#318dff" strokeWidth="1.800" /><path d="M6.500 16l3 3 5-5" stroke="#318dff" strokeWidth="2" /></S>
          <Txt $ls={-0.1}>My To-do's</Txt>
          <Badge>1</Badge>
        </HeaderLink>
        <Search>
          <Txt>tru</Txt>
          <S w={18}><circle cx="7.500" cy="7.500" r="5.500" stroke="#222" strokeWidth="1.800" /><path d="M11.500 11.500L17 17" stroke="#222" strokeWidth="2" /></S>
        </Search>
        <User>
          <Flag />
          <Avatar><S><circle cx="8" cy="4" r="2.800" stroke="#dfe9f7" strokeWidth="1.300" /><path d="M2 15v-2.500q0-2.500 2.500-2.500h7q2.500 0 2.500 2.500V15" stroke="#dfe9f7" strokeWidth="1.300" /></S></Avatar>
          <Chev w={11} h={7} c="#c9d8ee" sw={1.800} d="down" />
        </User>
      </Header>

      <Body>
        <Sheet>
          <Axis />
          <Days $h={34}>
            {days.map(({ i, red }) => (
              <Mark key={i} $pb={markPad(i)} $pr={red || i === 32 ? 1 : 0}>
                {(red || i === 32) && <NoLog />}
                {(i === 30 || i === 31) && <HourBar />}
                {i === 33 && <PortingBar />}
              </Mark>
            ))}
          </Days>
          <Days $h={26}>
            {days.map((x) => (
              <DateCell key={x.i} $red={x.red} $prev={x.prev} $future={x.future} $today={x.i === 28} $active={x.i === 29} $last={x.i === 34}>{x.d}</DateCell>
            ))}
          </Days>
          <Days $h={26}>
            {days.map((x) => (
              <DayCell key={x.i} $red={x.red} $dim={x.prev || x.future} $edge={x.i === 28}>{x.l}</DayCell>
            ))}
          </Days>
          <Weeks>
            <Week $first><WeekLabel>Week Avg.</WeekLabel>NA</Week>
            <Week>NA</Week>
            <Week>NA</Week>
            <Week $alert>00h 00m</Week>
            <Week $alert>05h 00m</Week>
          </Weeks>
          <LegendBar>
            <LegendToggle><Chev w={6} h={9} c="#fff" sw={1.600} d="right" /><Txt>Legends</Txt></LegendToggle>
            <LegendList>
              {legends.map(([t, w, ls, mark, gap]) => (
                <LegendItem key={t} $w={w} $gap={gap}>{mark}<Txt $ls={ls}>{t}</Txt></LegendItem>
              ))}
            </LegendList>
            <AddColumn>
              <AddButton><S w={12}><path d="M6 1v10M1 6h10" stroke="#fff" strokeWidth="2" /></S></AddButton>
              <Notch />
            </AddColumn>
          </LegendBar>

          <Dialog>
            <DialogTitle><Txt $ls={0.25}>Apply multiple date TopUp</Txt></DialogTitle>
            <DialogBody>
              <Fields>
                <Select><Txt $ls={-0.12}>CHN Campus Interns</Txt><Chev w={14} h={8} c="#555" d="down" /></Select>
                <Select><Txt $ls={-0.1}>Working from home</Txt><Chev w={14} h={8} c="#555" d="down" /></Select>
                <FieldGap />
                <Input><Txt $ls={-0.07}>Remarks is mandatory for Others (100 char max)</Txt></Input>
                <TimeRow>
                  <Input $w={137} $pr={21} $c="#666"><Txt $ls={-0.1}>09:00 AM</Txt><Spinner /></Input>
                  <Input $w={136} $pr={21} $c="#666"><Txt $ls={-0.15}>07:00 PM</Txt><Spinner /></Input>
                </TimeRow>
              </Fields>
              <Calendar>
                <MonthBar>
                  <Chev w={9} h={15} c="#bbb" d="left" />
                  <Txt $ls={0.25}>February 2022</Txt>
                  <Chev w={9} h={15} c="#318dff" d="right" />
                </MonthBar>
                <DateGrid>
                  {["Su", "Mo", "Tu", "We", "Th", "Fr", "Sa"].map((d) => <Cell key={d}>{d}</Cell>)}
                  {Array.from({ length: 35 }, (_, i) => {
                    const n = i - 1;
                    const ok = n > 0 && n < 29;
                    return <Cell key={i} $off={n < 17} $on={picked.includes(n)}>{ok ? n : ""}</Cell>;
                  })}
                </DateGrid>
              </Calendar>
              <Warning><Txt $ls={0.05}>You may not be tagged in the selected project for this period. Please, check and apply.</Txt></Warning>
            </DialogBody>
            <DialogFoot>
              <Button $w={97} $primary>Submit</Button>
              <Button $w={94}>Cancel</Button>
            </DialogFoot>
          </Dialog>
          <ScrollThumb />
        </Sheet>

        <Side>
          <SidePanel>
            <SideHandle><S w={10} h={17}><path d="M5 0l4.500 5.500h-9zM5 17l4.500-5.500h-9z" fill="#444" /><path d="M5 4v9" stroke="#444" strokeWidth="1.500" /></S></SideHandle>
            <SideItem $h={10} $mt={17}><S w={12} h={10}><path d="M0 5h7" stroke="#444" strokeWidth="1.500" /><path d="M6 .5L11.500 5 6 9.500z" fill="#444" /></S></SideItem>
            <SideItem $h={36} $mt={23}>
              <S w={17}><path d="M1 1h15v11H4.500L1 15z" stroke="#2f67ff" strokeWidth="1.900" /></S>
              <Txt $ls={0.1}>Feedback</Txt>
            </SideItem>
            <SideItem $h={35} $mt={25}>
              <S w={20} h={13}><path d="M1 1.500h18v3q-2.500 2 0 4v3H1v-3q2.500-2 0-4z" stroke="#5a87ff" strokeWidth="1.900" /><path d="M5.500 4.500v.1M5.500 8.500v.1M14.500 4.500v.1M14.500 8.500v.1" stroke="#5a87ff" strokeWidth="1.500" strokeLinecap="round" /><circle cx="10" cy="5.500" r="1.800" stroke="#5a87ff" /><path d="M7 9.500q3-3.500 6 0" stroke="#5a87ff" /></S>
              <Txt $ls={0.1}>Need Help</Txt>
            </SideItem>
          </SidePanel>
          <ChatBubble>
            <S w={60} h={64}>
              <defs><linearGradient id="bub" x1="0" y1="0" x2="1" y2="1"><stop offset=".5" stopColor="#fff" /><stop offset="1" stopColor="#b5b5b5" /></linearGradient></defs>
              <circle cx="28" cy="28" r="28" fill="#2fb5f5" />
              <path d="M27 55l14-1.500-2.500 9z" fill="#fff" stroke="#999" />
              <circle cx="32" cy="30" r="26.500" fill="url(#bub)" stroke="#8c8c8c" strokeWidth="1.800" />
              <circle cx="31.500" cy="29.500" r="22.500" fill="#dedede" />
              <path d="M31 54l9-1-2 8z" fill="#fff" />
              <path d="M20 54q11 2 18 9" stroke="#111" strokeWidth="2.400" />
              <path d="M18 29q-1-12 13-13T44 29M18 36q2 6 9 7" stroke="#111" strokeWidth="2" />
              <rect x="13.500" y="26" width="5.500" height="11.500" rx="1.500" fill="#f5be15" stroke="#111" strokeWidth="1.600" />
              <rect x="42.500" y="26" width="5.500" height="11.500" rx="1.500" fill="#f5be15" stroke="#111" strokeWidth="1.600" />
              <rect x="26.500" y="41.500" width="8.500" height="3.500" rx="1.700" fill="#f5be15" stroke="#111" strokeWidth="1.400" />
            </S>
          </ChatBubble>
        </Side>
      </Body>

      <Taskbar>
        {tasks.map((icon, i) => <TaskIcon key={i} $active={i === 16}>{icon}</TaskIcon>)}
        <Tray>
          <Chev w={12} h={7} c="#fff" sw={1.400} d="up" />
          <TrayLang>ENG</TrayLang>
          <TrayIcons>
            <S w={17}><path d="M11 2.500H1.500v9.500h12V9M7.500 12v3M4 15h7M13.500 1h3v4h-3zM15 5v9" stroke="#fff" strokeWidth="1.200" /></S>
            <S><path d="M1 6h2.500L7 2.500v11L3.500 10H1z" stroke="#fff" /><path d="M9 6q1.500 2 0 4" stroke="#fff" strokeWidth="1.200" /><path d="M11 4.500q3 3.500 0 7M13 3q4 5 0 10" stroke="#8a7a78" strokeWidth="1.100" /></S>
            <S w={17} h={11}><rect x=".7" y=".7" width="13" height="9" rx="1.500" stroke="#fff" strokeWidth="1.200" /><path d="M2.500 2.500h7v5.500h-7z" fill="#fff" /><path d="M15.500 3.500v4" stroke="#fff" strokeWidth="1.500" /></S>
          </TrayIcons>
          <Clock><Txt>9:48 AM</Txt><Txt>3/4/2022</Txt></Clock>
        </Tray>
      </Taskbar>
    </Screen>
  );
}
